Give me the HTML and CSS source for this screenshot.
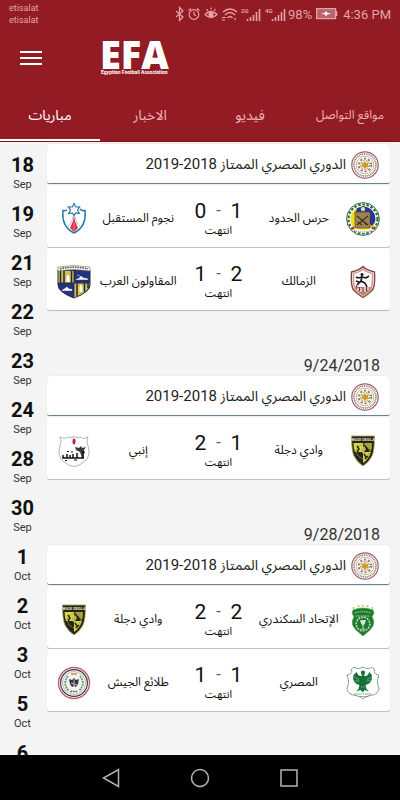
FILE: index.html
```html
<!DOCTYPE html>
<html lang="ar">
<head>
<meta charset="utf-8">
<meta name="viewport" content="width=device-width, initial-scale=1">
<title>EFA</title>
<link rel="stylesheet" href="styles.css">
</head>
<body>
<svg class="sprite" aria-hidden="true">
  <symbol id="league" viewBox="0 0 28 28">
    <circle cx="14" cy="14" r="13.2" fill="#fff" stroke="#a85a62" stroke-width="1.2"/>
    <circle cx="14" cy="14" r="11" fill="none" stroke="#77706a" stroke-width="1.6" stroke-dasharray="1 .8"/>
    <circle cx="14" cy="14" r="8.8" fill="#fdf8ee" stroke="#b49a6c" stroke-width=".7"/>
    <circle cx="14" cy="14" r="6.3" fill="none" stroke="#8a8078" stroke-width="2" stroke-dasharray="2 2"/>
    <circle cx="14" cy="14" r="4.4" fill="none" stroke="#c9b184" stroke-width="1.4" stroke-dasharray="2 1"/>
    <path d="M14 10l1.2 2 2.4-.5-.7 2.2 1.4 1.8-2.3.5L14 18l-1.7-2-2.4-.5 1.300-1.800-.6-2.200 2.300.5z" fill="#cf9a3c"/>
  </symbol>
  <symbol id="haras" viewBox="0 0 34 34">
    <circle cx="17" cy="17" r="16.400" fill="#fff" stroke="#28552f" stroke-width=".9"/>
    <circle cx="17" cy="17" r="14.500" fill="none" stroke="#2f6b38" stroke-width="2.200" stroke-dasharray="2.600 1.600"/>
    <circle cx="17" cy="17" r="12.500" fill="#f1dc16"/>
    <path d="M17 4.500A12.500 12.500 0 0 1 29 20l-3 4-3-3V10H10l1-4z" fill="#2334a0"/>
    <rect x="9" y="10" width="15" height="16" fill="#9d8350" stroke="#5b4a2a" stroke-width=".7"/>
    <path d="M11 14l11 9M22 14l-11 9M12 20l4 3M18 20l3 3" stroke="#3d3320" stroke-width="1.300"/>
    <circle cx="17" cy="7" r="2.600" fill="#d9dbe8" stroke="#2d2d46" stroke-width=".8"/>
    <path d="M7 27q10 5 20 0" fill="none" stroke="#fff" stroke-width="3"/>
    <path d="M8 28q9 4 18 0" fill="none" stroke="#665" stroke-width="1" stroke-dasharray="1 1"/>
    <circle cx="7" cy="26" r="1.500" fill="#c33a32"/><circle cx="27" cy="26" r="1.500" fill="#c33a32"/>
  </symbol>
  <symbol id="nogoom" viewBox="0 0 34 34">
    <path d="M10 8Q8 9 6 8.500C5 18 7 26 17 31 27 26 29 18 28 8.500 26 9 24 8 23 7" fill="#fff" stroke="#2878a8" stroke-width="1.500"/>
    <path d="M16.500 13Q15 22 9.500 26M17.500 13q1.500 9 7 13" fill="none" stroke="#8fb6cc" stroke-width=".7"/>
    <path d="M17 13l1 6 3 7-4 4-4-4 3-7z" fill="#df3642"/>
    <path d="M17 20v9" stroke="#f6b9bd" stroke-width=".5"/>
    <path d="M17 1.500l1.700 3.500 4-.2-2.200 3.200 1.800 3.500-3.700-.6L17 13.500l-1.700-2.600-3.700.6L13.500 8l-2.200-3.200 4 .2z" fill="#fff" stroke="#2878a8" stroke-width="1.200"/>
  </symbol>
  <symbol id="arab" viewBox="0 0 34 34">
    <path d="M1 5v15q0 7 16 13 16-6 16-13V5z" fill="#23337e" stroke="#2a2b38" stroke-width="1"/>
    <path d="M1.500 6H17v12H1.500z" fill="#d0c056"/>
    <path d="M17 18h15.500q0 9-15.500 14.500z" fill="#d0c056"/>
    <path d="M3.500 6v12M7 6v12M14.500 6v12M20 18v13M27.500 18v9M31 18v5" stroke="#292b36" stroke-width="1.500"/>
    <path d="M10 17v-6l1-1 1 2v5M23 27v-5l1-2 1 3v4" fill="#fff" stroke="#fff" stroke-width="1"/>
    <path d="M19 14.500l3-1 2-2.500 2 2 4 .5 1 1zM5 25.500l3-2 2-1.500 2 2 3 .5v1zM20 10l3 1" fill="#fff" stroke="#fff" stroke-width=".5"/>
    <path d="M1 2q16-3 32 0v4Q17 3 1 6z" fill="#f6f5e9" stroke="#77776f" stroke-width=".6"/>
    <path d="M3 3.800q14-3 28 0" fill="none" stroke="#4b4b49" stroke-width="1.500" stroke-dasharray="1.500 1"/>
    <path d="M17 5v27M1.500 18h31" stroke="#20243c" stroke-width=".8"/>
  </symbol>
  <symbol id="zamalek" viewBox="0 0 34 34">
    <path d="M17 1.500Q14 5 5.500 7q-1 16 3 19Q13 30 17 32.500 21 30 25.500 26q4-3 3-19Q20 5 17 1.500z" fill="#fff" stroke="#7a443e" stroke-width="1.300"/>
    <path d="M17 4Q14 7 7.500 8.500 7 23 10 25q4 3 7 5.500 3-2.500 7-5.500 3-2 2.500-16.500Q20 7 17 4z" fill="#fff" stroke="#d99b8d" stroke-width="1.700"/>
    <path d="M9 22h16l-1 3-7 5-7-5z" fill="#bd7667"/>
    <circle cx="16" cy="9.500" r="1.500" fill="#161616"/>
    <path d="M16 11l-1 5-3 3-1.500 3M15 16l4 2 2 4M16 12l4 1 3-2M16 12l-4 1-2-1M10 16l3 1" fill="none" stroke="#161616" stroke-width="1.600"/>
    <path d="M12 23v3M15 23v4M19 22v5M22 22v3M11 21h5" stroke="#eee" stroke-width="1.300"/>
    <path d="M13.500 22v4M20.500 22v4" stroke="#333" stroke-width=".8"/>
  </symbol>
  <symbol id="degla" viewBox="0 0 34 34">
    <path d="M5.500 2h23q0 15-2.500 20-3 6-9 10-6-4-9-10Q5.500 17 5.500 2z" fill="#24241e" stroke="#aaa65a" stroke-width=".9"/>
    <path d="M7.500 9H17v9H9Q7.500 14 7.500 9zM17 18h8q-2 7-8 11z" fill="#dbd43c"/>
    <path d="M18 9h8q0 5-1 8l-4-4z" fill="#a9a438"/>
    <path d="M12 13l5-3 5 3 2 5-3 5-4 2-5-3-2-5z" fill="none" stroke="#92904a" stroke-width="1" stroke-dasharray="2 1"/>
    <path d="M15 15l3-3 2 3-2 3 3 2-5-1z" fill="#bcb75a"/>
    <path d="M11 12l2 3-2 3M18 20l2 3M19 25l3-3" fill="none" stroke="#27271b" stroke-width="1.500"/>
    <text class="crest-text" x="17" y="6.500">WADI DEGLA</text>
  </symbol>
  <symbol id="enppi" viewBox="0 0 34 34">
    <path d="M3 3q4 3 8 0l2 1q4-3 8 0l2-1q4 3 8 0-2 4 0 9 3 10-3 15-5 5-11 5.500Q11 32 6 27 0 22 3 12q2-5 0-9z" fill="#fff" stroke="#8d9399" stroke-width=".7"/>
    <ellipse cx="17" cy="7.500" rx="1.500" ry="3" fill="#c32036"/>
    <path d="M18 13l4 1 2-2 1 2 4-1-2 3 1 3-2 1 1 4h-2l-2-6-4-2z" fill="#3b3b3b"/>
    <path d="M6 21v3h19M10 20v4M13 21v3M16 20v4M20 19v5M26 17v8" fill="none" stroke="#111" stroke-width="1.500"/>
    <path d="M10 17.500h2M14 18h2M17 26h3M8 26.500h2" stroke="#111" stroke-width="1.200"/>
  </symbol>
  <symbol id="ittihad" viewBox="0 0 34 34">
    <path d="M7 4.500l1.500 1M12 2.500l1 1.500M17 2v1.500M22 2.500l-1 1.500M27 4.500l-1.500 1" stroke="#c6c45c" stroke-width="2"/>
    <path d="M7 7q10-4 20 0l1 3-2 4q3 4 1 9l-3 4-7 6-7-6-3-4q-2-5 1-9l-2-4z" fill="#1d7a2e" stroke="#58a45f" stroke-width=".7"/>
    <path d="M9 10q8-3 16 0M10 13h14" fill="none" stroke="#8ebc71" stroke-width="1.400" stroke-dasharray="1.500 .8"/>
    <circle cx="17" cy="21" r="6.800" fill="none" stroke="#c1dfbe" stroke-width="1.500" stroke-dasharray="2 1"/>
    <path d="M14.500 17.500h5l-1 3-1.500 2-1.500-2zM17 22v4M15 26h4" fill="#d9ead8" stroke="#d9ead8" stroke-width=".8"/>
  </symbol>
  <symbol id="masry" viewBox="0 0 34 34">
    <path d="M8 1q4 3 9 0 5 3 9 0l3 3-1 2q2 3 5 3-3 7 0 13 0 5-6 7-7 1-10 4-3-3-10-4-6-2-6-7 3-6 0-13 3 0 5-3L5 4z" fill="#fff" stroke="#527959" stroke-width=".9" stroke-dasharray="2 .5"/>
    <path d="M17 4.500q2.500 0 2 2.500l-1 3q4.500.5 5-4 3.500 2 3 6-.5 5-5 6.500l-1.500.5 1 4 2.500 2.500-4.500-1.500L17 26.500 14.500 24 10 25.500l2.500-2.500 1-4-1.500-.5Q7.500 17 7 12 7 8 11 6q.5 4.500 5 4l-1-3q-.5-2.500 2-2.500z" fill="#16703a"/>
    <path d="M8 11l5 2.500M26 11l-5 2.500M8.500 15h5M25.500 15h-5M15 21h4" stroke="#a5caae" stroke-width=".6"/>
    <path d="M8 28h18M12 30.500h10" stroke="#6a9574" stroke-width="1" stroke-dasharray="1.500 .7"/>
  </symbol>
  <symbol id="army" viewBox="0 0 34 34">
    <circle cx="17" cy="17" r="15.500" fill="#fff" stroke="#b9606a" stroke-width="1.400"/>
    <circle cx="17" cy="17" r="13.400" fill="none" stroke="#3a3a3e" stroke-width="1.200"/>
    <circle cx="17" cy="17" r="11.500" fill="#f1f3ed" stroke="#b4bab0" stroke-width="1"/>
    <path d="M11 10Q5 18 12 25M23 10q6 8-1 15" fill="none" stroke="#73977a" stroke-width="1.800" stroke-dasharray="2 .8"/>
    <path d="M17 12l2 2 3-1-1 5-2 3-2-1-2 1-2-3-1-5 3 1z" fill="#30343c"/>
    <path d="M17 13v7M14 17l6 2" stroke="#ddd" stroke-width=".8"/>
    <path d="M14 8h6" stroke="#d38b4d" stroke-width="1.500"/>
    <path d="M13 25.500h8" stroke="#666" stroke-width="1.300" stroke-dasharray="2 .7"/>
  </symbol>
</svg>

<header class="app-header">
  <div class="status">
    <div class="carriers"><span>etisalat</span><span>etisalat</span></div>
    <div class="indicators">
      <svg class="status-icons" viewBox="0 0 112 20" aria-hidden="true" fill="none" stroke="#e3a3a8" stroke-width="1.200">
        <path d="M1 7l7 6-3.500 3.500v-13L8 7l-7 6"/>
        <circle cx="19" cy="10.500" r="4.800"/><path d="M19 7.500v3l2 1.500M13.500 6.500l2.500-2M22 4.500l2.500 2"/>
        <path d="M30 10.500q6-6 12 0-6 6-12 0zM33 7l-1.500-2M36 5.500V3.500M39 7l1.500-2"/><circle cx="36" cy="10.500" r="2" fill="#e3a3a8"/>
        <path d="M48 8q7-6 14 0M50 11q5-5 10 0M52.500 14q2.500-3 5 0" stroke-width="1.500"/><path d="M47 13.500h4M47 16h3M60 14v2"/>
        <path d="M74.500 15v2M77.500 13v4M80.500 11v6M83.500 8v9M86.500 5v12" transform="translate(-2 0)" stroke-width="1.600"/>
        <path d="M98.500 15v2M101.500 13v4M104.500 11v6M107.500 8v9M110.500 5v12" transform="translate(-1 0)" stroke-width="1.600"/>
        <text class="net-text" x="66" y="9">2G</text><text class="net-text" x="90" y="9">4G</text>
      </svg>
      <span class="battery-text">98%</span>
      <svg class="battery" viewBox="0 0 22 12" aria-hidden="true">
        <rect x=".6" y=".6" width="19" height="10" fill="#b9646b" stroke="#e3a3a8" stroke-width="1.200"/>
        <path d="M20.500 3v5" stroke="#e3a3a8" stroke-width="1.600"/>
        <path d="M5 5.600l4-.8 1-2 1.300 2 4 .8-4 .8-1.300 2-1-2z" fill="#fff"/>
      </svg>
      <span class="clock">4:36 PM</span>
    </div>
  </div>
  <div class="toolbar">
    <button class="menu" type="button" aria-label="القائمة"><span></span><span></span><span></span></button>
    <div class="brand"><strong>EFA</strong><small>Egyptian Football Association</small></div>
  </div>
  <nav class="tabs">
    <a class="tab active" href="#">مباريات</a>
    <a class="tab" href="#">الاخبار</a>
    <a class="tab" href="#">فيديو</a>
    <a class="tab small" href="#">مواقع التواصل</a>
  </nav>
</header>

<div class="content">
  <nav class="days">
    <button type="button"><b>18</b><span>Sep</span></button>
    <button type="button"><b>19</b><span>Sep</span></button>
    <button type="button"><b>21</b><span>Sep</span></button>
    <button type="button"><b>22</b><span>Sep</span></button>
    <button type="button"><b>23</b><span>Sep</span></button>
    <button type="button"><b>24</b><span>Sep</span></button>
    <button type="button"><b>28</b><span>Sep</span></button>
    <button type="button"><b>30</b><span>Sep</span></button>
    <button type="button"><b>1</b><span>Oct</span></button>
    <button type="button"><b>2</b><span>Oct</span></button>
    <button type="button"><b>3</b><span>Oct</span></button>
    <button type="button"><b>5</b><span>Oct</span></button>
    <button type="button"><b>6</b></button>
  </nav>

  <main class="fixtures">
    <section class="group">
      <h2 class="league"><svg class="league-logo" aria-hidden="true"><use href="#league"/></svg><span dir="rtl">الدوري المصري الممتاز <span class="season">2018-2019</span></span></h2>
      <article class="match">
        <svg class="crest" aria-hidden="true"><use href="#nogoom"/></svg>
        <span class="team">نجوم المستقبل</span>
        <div class="result"><div class="score"><span>0</span><i>-</i><span>1</span></div><span class="state">انتهت</span></div>
        <span class="team">حرس الحدود</span>
        <svg class="crest" aria-hidden="true"><use href="#haras"/></svg>
      </article>
      <article class="match">
        <svg class="crest" aria-hidden="true"><use href="#arab"/></svg>
        <span class="team">المقاولون العرب</span>
        <div class="result"><div class="score"><span>1</span><i>-</i><span>2</span></div><span class="state">انتهت</span></div>
        <span class="team">الزمالك</span>
        <svg class="crest" aria-hidden="true"><use href="#zamalek"/></svg>
      </article>
    </section>

    <section class="group">
      <time class="date">9/24/2018</time>
      <h2 class="league"><svg class="league-logo" aria-hidden="true"><use href="#league"/></svg><span dir="rtl">الدوري المصري الممتاز <span class="season">2018-2019</span></span></h2>
      <article class="match">
        <svg class="crest" aria-hidden="true"><use href="#enppi"/></svg>
        <span class="team">إنبي</span>
        <div class="result"><div class="score"><span>2</span><i>-</i><span>1</span></div><span class="state">انتهت</span></div>
        <span class="team">وادي دجلة</span>
        <svg class="crest" aria-hidden="true"><use href="#degla"/></svg>
      </article>
    </section>

    <section class="group">
      <time class="date">9/28/2018</time>
      <h2 class="league"><svg class="league-logo" aria-hidden="true"><use href="#league"/></svg><span dir="rtl">الدوري المصري الممتاز <span class="season">2018-2019</span></span></h2>
      <article class="match">
        <svg class="crest" aria-hidden="true"><use href="#degla"/></svg>
        <span class="team">وادي دجلة</span>
        <div class="result"><div class="score"><span>2</span><i>-</i><span>2</span></div><span class="state">انتهت</span></div>
        <span class="team">الإتحاد السكندري</span>
        <svg class="crest" aria-hidden="true"><use href="#ittihad"/></svg>
      </article>
      <article class="match">
        <svg class="crest" aria-hidden="true"><use href="#army"/></svg>
        <span class="team">طلائع الجيش</span>
        <div class="result"><div class="score"><span>1</span><i>-</i><span>1</span></div><span class="state">انتهت</span></div>
        <span class="team">المصري</span>
        <svg class="crest" aria-hidden="true"><use href="#masry"/></svg>
      </article>
    </section>
  </main>
</div>

<footer class="system-nav">
  <button type="button" aria-label="رجوع"><svg viewBox="0 0 20 20"><path d="M17.500 1.500v17L2.500 10z"/></svg></button>
  <button type="button" aria-label="الرئيسية"><svg viewBox="0 0 20 20"><circle cx="10" cy="10" r="8.500"/></svg></button>
  <button type="button" aria-label="التطبيقات"><svg viewBox="0 0 20 20"><rect x="2" y="2" width="16" height="16"/></svg></button>
</footer>
</body>
</html>
```
FILE: styles.css
```css
* { box-sizing: border-box; }

body {
  margin: 0;
  height: 100vh;
  display: flex;
  flex-direction: column;
  overflow: hidden;
  background: #f4f4f4;
  color: #111;
  font-family: Roboto, "Noto Sans Arabic", "DejaVu Sans", sans-serif;
}

button {
  border: 0;
  padding: 0;
  background: none;
  color: inherit;
  font: inherit;
}

.sprite { position: absolute; width: 0; height: 0; }
.crest-text { font: 700 4px Roboto, sans-serif; text-anchor: middle; fill: #e4e2c0; }
.net-text { font: 700 6px Roboto, sans-serif; fill: #e3a3a8; stroke: none; }

.app-header { flex: none; background: #931c24; color: #fff; }

.status {
  display: flex;
  justify-content: space-between;
  height: 28px;
  padding: 2px 9px 0;
  color: #e3a3a8;
}
.carriers { display: flex; flex-direction: column; font-size: 9px; line-height: 12px; }
.indicators { display: flex; align-items: center; height: 24px; font-size: 13px; }
.status-icons { width: 112px; height: 20px; }
.battery-text { margin-left: 1px; }
.battery { width: 22px; height: 12px; margin: 0 5px 0 4px; }

.toolbar { display: flex; height: 59px; padding: 0 20px; }
.menu { display: flex; flex-direction: column; gap: 4px; align-self: center; width: 22px; }
.menu span { height: 2px; background: #fff; }
.brand { margin-left: 58px; padding-top: 10px; font-family: "Open Sans", sans-serif; }
.brand strong { display: block; font-size: 38px; font-weight: 800; line-height: 32px; }
.brand small { display: block; padding-left: 1px; font-family: Roboto, sans-serif; font-size: 5px; font-weight: 700; line-height: 4px; white-space: nowrap; }

.tabs { display: grid; grid-template-columns: repeat(4, 1fr); height: 55px; border-bottom: 1px solid #8a1016; }
.tab {
  display: flex;
  align-items: center;
  justify-content: center;
  padding-top: 4px;
  border-bottom: 2px solid transparent;
  color: #eab4b7;
  font-size: 14px;
  text-decoration: none;
  white-space: nowrap;
}
.tab.small { font-size: 12px; }
.tab.active { color: #fff; border-color: #fff; }

.content { flex: 1; min-height: 0; display: flex; overflow: hidden; }

.days { flex: none; width: 45px; padding-top: 5px; }
.days button { display: flex; flex-direction: column; align-items: center; justify-content: flex-start; width: 100%; height: 49px; padding-top: 5px; }
.days b { font-size: 20px; line-height: 26px; }
.days span { font-size: 11px; line-height: 14px; color: #333; }

.fixtures { flex: 1; min-width: 0; padding: 2px 10px 0 2px; }
.group { margin-bottom: 44px; }
.date { display: block; padding: 1px 10px 0; color: #333; font-size: 16px; line-height: 21px; text-align: right; }

.league {
  display: flex;
  flex-direction: row-reverse;
  align-items: center;
  justify-content: flex-start;
  gap: 5px;
  height: 40px;
  margin: 0 0 1px;
  padding: 2px 11px 0;
  border-bottom: 1px solid #6a8390;
  border-radius: 3px;
  background: #fff;
  box-shadow: 0 0 1px #bbb;
  color: #222;
  font-size: 14px;
  font-weight: 400;
  white-space: nowrap;
}
.season { font-size: 15px; }
.league-logo { flex: none; width: 28px; height: 28px; }

.match {
  display: grid;
  grid-template-columns: 54px minmax(0, 1fr) 86px minmax(0, 1fr) 54px;
  align-items: center;
  justify-items: center;
  height: 62px;
  margin-bottom: 1px;
  border-radius: 3px;
  background: #fff;
  box-shadow: 0 1px 1px #b5bcc0;
}
.crest { width: 34px; height: 34px; margin-top: 6px; }
.team { margin-top: 4px; font-size: 12px; white-space: nowrap; }
.result { display: flex; flex-direction: column; align-items: center; padding-top: 6px; }
.score { display: grid; grid-template-columns: 18px 18px 18px; text-align: center; font-size: 21px; line-height: 24px; }
.score i { color: #555; font-size: 16px; font-style: normal; }
.state { font-size: 11px; line-height: 16px; }

.system-nav {
  flex: none;
  display: flex;
  justify-content: center;
  align-items: center;
  gap: 69px;
  height: 45px;
  background: #000;
}
.system-nav button { width: 20px; height: 20px; }
.system-nav svg { display: block; fill: none; stroke: #b5b5b5; stroke-width: 1.5px; }
```
